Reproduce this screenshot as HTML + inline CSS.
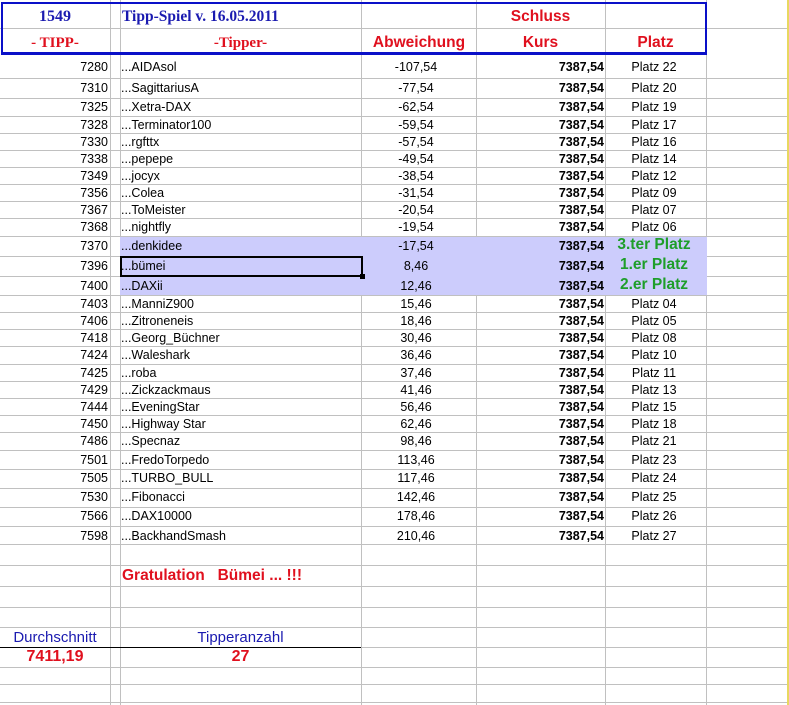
<!DOCTYPE html>
<html><head><meta charset="utf-8"><style>
*{margin:0;padding:0;box-sizing:border-box}
body{width:789px;height:705px;overflow:hidden;background:#fff;position:relative;font-family:"Liberation Sans",Arial,sans-serif;font-size:12.5px;color:#000}
.h{position:absolute;left:0;width:787px;height:1px;background:#c0c0c0}
.v{position:absolute;top:0;width:1px;height:705px;background:#c0c0c0}
.t{position:absolute;white-space:nowrap;line-height:14px}
.a{width:108px;left:0;text-align:right}
.b{left:121px}
.c{left:362px;width:108px;text-align:center}
.d{left:477px;width:127px;text-align:right;font-weight:bold}
.e{left:606px;width:96px;text-align:center}
.g{color:#1e9e2a;font-weight:bold;font-size:15.5px;line-height:16px}
.red{color:#e0101e}
.ser{font-family:"Liberation Serif",serif;font-weight:bold}
.hd{font-weight:bold;font-size:15.5px;line-height:16px}
</style></head><body>
<div class="v" style="left:110px"></div>
<div class="v" style="left:120px"></div>
<div class="v" style="left:361px"></div>
<div class="v" style="left:476px"></div>
<div class="v" style="left:605px"></div>
<div class="v" style="left:706px"></div>
<div style="position:absolute;left:787px;top:0;width:2px;height:705px;background:#e8d860"></div>
<div class="h" style="top:28px"></div>
<div class="h" style="top:78px"></div><div class="h" style="top:98px"></div><div class="h" style="top:116px"></div><div class="h" style="top:133px"></div><div class="h" style="top:150px"></div><div class="h" style="top:167px"></div><div class="h" style="top:184px"></div><div class="h" style="top:201px"></div><div class="h" style="top:218px"></div><div class="h" style="top:236px"></div><div class="h" style="top:256px"></div><div class="h" style="top:276px"></div><div class="h" style="top:295px"></div><div class="h" style="top:312px"></div><div class="h" style="top:329px"></div><div class="h" style="top:346px"></div><div class="h" style="top:364px"></div><div class="h" style="top:381px"></div><div class="h" style="top:398px"></div><div class="h" style="top:415px"></div><div class="h" style="top:432px"></div><div class="h" style="top:450px"></div><div class="h" style="top:469px"></div><div class="h" style="top:488px"></div><div class="h" style="top:507px"></div><div class="h" style="top:526px"></div><div class="h" style="top:544px"></div><div class="h" style="top:565px"></div><div class="h" style="top:586px"></div><div class="h" style="top:607px"></div><div class="h" style="top:627px"></div><div class="h" style="top:647px"></div><div class="h" style="top:667px"></div><div class="h" style="top:684px"></div><div class="h" style="top:702px"></div>
<div style="position:absolute;left:120px;top:237px;width:587px;height:58px;background:#ccccfc"></div>
<div style="position:absolute;left:0;top:647px;width:361px;height:1px;background:#000"></div>
<div style="position:absolute;left:1px;top:2px;width:706px;height:53px;border:2px solid #0a10c8;border-bottom-width:3px"></div>
<div style="position:absolute;left:120px;top:256px;width:243px;height:21px;border:2px solid #000"></div>
<div style="position:absolute;left:360px;top:274px;width:5px;height:5px;background:#000"></div>

<div class="t ser" style="color:#1a1ab0;font-size:16px;line-height:16px;top:9px;left:0;width:110px;text-align:center">1549</div>
<div class="t ser" style="color:#1a1ab0;font-size:15.5px;line-height:16px;top:9px;left:122px">Tipp-Spiel v. 16.05.2011</div>
<div class="t ser red" style="font-size:15px;line-height:16px;top:35px;left:0;width:110px;text-align:center">- TIPP-</div>
<div class="t ser red" style="font-size:15px;line-height:16px;top:35px;left:120px;width:241px;text-align:center">-Tipper-</div>
<div class="t red hd" style="top:35px;left:362px;width:114px;text-align:center">Abweichung</div>
<div class="t red hd" style="top:9px;left:476px;width:129px;text-align:center">Schluss</div>
<div class="t red hd" style="top:35px;left:476px;width:129px;text-align:center">Kurs</div>
<div class="t red hd" style="top:35px;left:605px;width:101px;text-align:center">Platz</div>

<div class="t a" style="top:60px">7280</div><div class="t b" style="top:60px">...AIDAsol</div><div class="t c" style="top:60px">-107,54</div><div class="t d" style="top:60px">7387,54</div><div class="t e" style="top:60px">Platz 22</div>
<div class="t a" style="top:81px">7310</div><div class="t b" style="top:81px">...SagittariusA</div><div class="t c" style="top:81px">-77,54</div><div class="t d" style="top:81px">7387,54</div><div class="t e" style="top:81px">Platz 20</div>
<div class="t a" style="top:100px">7325</div><div class="t b" style="top:100px">...Xetra-DAX</div><div class="t c" style="top:100px">-62,54</div><div class="t d" style="top:100px">7387,54</div><div class="t e" style="top:100px">Platz 19</div>
<div class="t a" style="top:118px">7328</div><div class="t b" style="top:118px">...Terminator100</div><div class="t c" style="top:118px">-59,54</div><div class="t d" style="top:118px">7387,54</div><div class="t e" style="top:118px">Platz 17</div>
<div class="t a" style="top:135px">7330</div><div class="t b" style="top:135px">...rgfttx</div><div class="t c" style="top:135px">-57,54</div><div class="t d" style="top:135px">7387,54</div><div class="t e" style="top:135px">Platz 16</div>
<div class="t a" style="top:152px">7338</div><div class="t b" style="top:152px">...pepepe</div><div class="t c" style="top:152px">-49,54</div><div class="t d" style="top:152px">7387,54</div><div class="t e" style="top:152px">Platz 14</div>
<div class="t a" style="top:169px">7349</div><div class="t b" style="top:169px">...jocyx</div><div class="t c" style="top:169px">-38,54</div><div class="t d" style="top:169px">7387,54</div><div class="t e" style="top:169px">Platz 12</div>
<div class="t a" style="top:186px">7356</div><div class="t b" style="top:186px">...Colea</div><div class="t c" style="top:186px">-31,54</div><div class="t d" style="top:186px">7387,54</div><div class="t e" style="top:186px">Platz 09</div>
<div class="t a" style="top:203px">7367</div><div class="t b" style="top:203px">...ToMeister</div><div class="t c" style="top:203px">-20,54</div><div class="t d" style="top:203px">7387,54</div><div class="t e" style="top:203px">Platz 07</div>
<div class="t a" style="top:220px">7368</div><div class="t b" style="top:220px">...nightfly</div><div class="t c" style="top:220px">-19,54</div><div class="t d" style="top:220px">7387,54</div><div class="t e" style="top:220px">Platz 06</div>
<div class="t a" style="top:239px">7370</div><div class="t b" style="top:239px">...denkidee</div><div class="t c" style="top:239px">-17,54</div><div class="t d" style="top:239px">7387,54</div><div class="t e g" style="top:237px">3.ter Platz</div>
<div class="t a" style="top:259px">7396</div><div class="t b" style="top:259px">...bümei</div><div class="t c" style="top:259px">8,46</div><div class="t d" style="top:259px">7387,54</div><div class="t e g" style="top:257px">1.er Platz</div>
<div class="t a" style="top:279px">7400</div><div class="t b" style="top:279px">...DAXii</div><div class="t c" style="top:279px">12,46</div><div class="t d" style="top:279px">7387,54</div><div class="t e g" style="top:277px">2.er Platz</div>
<div class="t a" style="top:297px">7403</div><div class="t b" style="top:297px">...ManniZ900</div><div class="t c" style="top:297px">15,46</div><div class="t d" style="top:297px">7387,54</div><div class="t e" style="top:297px">Platz 04</div>
<div class="t a" style="top:314px">7406</div><div class="t b" style="top:314px">...Zitroneneis</div><div class="t c" style="top:314px">18,46</div><div class="t d" style="top:314px">7387,54</div><div class="t e" style="top:314px">Platz 05</div>
<div class="t a" style="top:331px">7418</div><div class="t b" style="top:331px">...Georg_Büchner</div><div class="t c" style="top:331px">30,46</div><div class="t d" style="top:331px">7387,54</div><div class="t e" style="top:331px">Platz 08</div>
<div class="t a" style="top:348px">7424</div><div class="t b" style="top:348px">...Waleshark</div><div class="t c" style="top:348px">36,46</div><div class="t d" style="top:348px">7387,54</div><div class="t e" style="top:348px">Platz 10</div>
<div class="t a" style="top:366px">7425</div><div class="t b" style="top:366px">...roba</div><div class="t c" style="top:366px">37,46</div><div class="t d" style="top:366px">7387,54</div><div class="t e" style="top:366px">Platz 11</div>
<div class="t a" style="top:383px">7429</div><div class="t b" style="top:383px">...Zickzackmaus</div><div class="t c" style="top:383px">41,46</div><div class="t d" style="top:383px">7387,54</div><div class="t e" style="top:383px">Platz 13</div>
<div class="t a" style="top:400px">7444</div><div class="t b" style="top:400px">...EveningStar</div><div class="t c" style="top:400px">56,46</div><div class="t d" style="top:400px">7387,54</div><div class="t e" style="top:400px">Platz 15</div>
<div class="t a" style="top:417px">7450</div><div class="t b" style="top:417px">...Highway Star</div><div class="t c" style="top:417px">62,46</div><div class="t d" style="top:417px">7387,54</div><div class="t e" style="top:417px">Platz 18</div>
<div class="t a" style="top:434px">7486</div><div class="t b" style="top:434px">...Specnaz</div><div class="t c" style="top:434px">98,46</div><div class="t d" style="top:434px">7387,54</div><div class="t e" style="top:434px">Platz 21</div>
<div class="t a" style="top:453px">7501</div><div class="t b" style="top:453px">...FredoTorpedo</div><div class="t c" style="top:453px">113,46</div><div class="t d" style="top:453px">7387,54</div><div class="t e" style="top:453px">Platz 23</div>
<div class="t a" style="top:471px">7505</div><div class="t b" style="top:471px">...TURBO_BULL</div><div class="t c" style="top:471px">117,46</div><div class="t d" style="top:471px">7387,54</div><div class="t e" style="top:471px">Platz 24</div>
<div class="t a" style="top:490px">7530</div><div class="t b" style="top:490px">...Fibonacci</div><div class="t c" style="top:490px">142,46</div><div class="t d" style="top:490px">7387,54</div><div class="t e" style="top:490px">Platz 25</div>
<div class="t a" style="top:509px">7566</div><div class="t b" style="top:509px">...DAX10000</div><div class="t c" style="top:509px">178,46</div><div class="t d" style="top:509px">7387,54</div><div class="t e" style="top:509px">Platz 26</div>
<div class="t a" style="top:529px">7598</div><div class="t b" style="top:529px">...BackhandSmash</div><div class="t c" style="top:529px">210,46</div><div class="t d" style="top:529px">7387,54</div><div class="t e" style="top:529px">Platz 27</div>

<div class="t red" style="font-weight:bold;font-size:15.5px;line-height:16px;top:568px;left:122px">Gratulation&nbsp;&nbsp; Bümei ... !!!</div>
<div class="t" style="color:#1a1ab0;font-size:15px;line-height:16px;top:630px;left:0;width:110px;text-align:center">Durchschnitt</div>
<div class="t" style="color:#1a1ab0;font-size:15px;line-height:16px;top:630px;left:120px;width:241px;text-align:center">Tipperanzahl</div>
<div class="t red" style="font-weight:bold;font-size:16px;line-height:16px;top:649px;left:0;width:110px;text-align:center">7411,19</div>
<div class="t red" style="font-weight:bold;font-size:16px;line-height:16px;top:649px;left:120px;width:241px;text-align:center">27</div>
</body></html>
